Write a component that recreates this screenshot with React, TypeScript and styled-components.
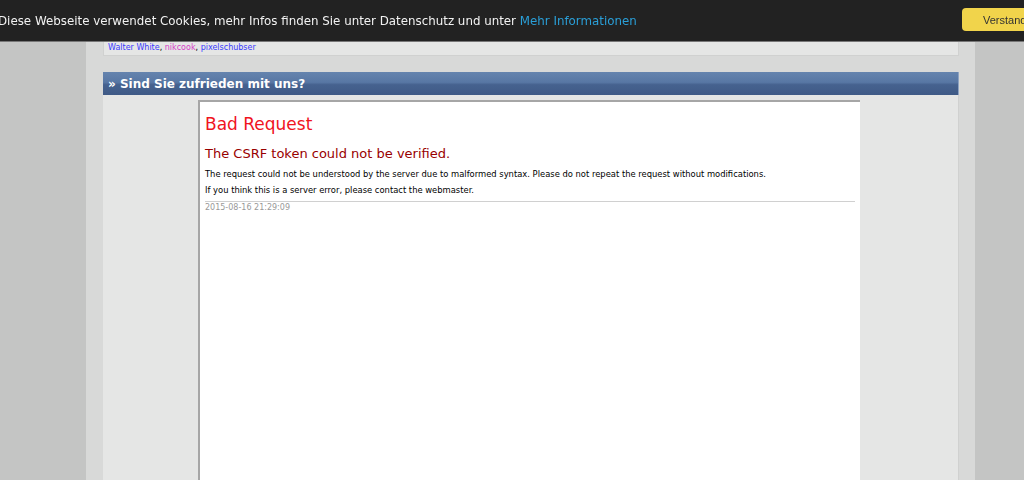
import React from "react";
import styled, { createGlobalStyle } from "styled-components";

const Global = createGlobalStyle`
  html, body {
    margin: 0;
    padding: 0;
    background: #c4c5c4;
    font-family: "DejaVu Sans", Verdana, sans-serif;
    overflow: hidden;
  }
`;

const CookieBar = styled.div`
  position: fixed;
  top: 0;
  left: 0;
  right: 0;
  height: 42px;
  background: #222222;
  border-bottom: 1px solid #777;
  box-sizing: border-box;
  display: flex;
  align-items: center;
  z-index: 10;
`;

const CookieText = styled.span`
  margin: 1px 0 0 -2px;
  color: #f2f2f2;
  font-size: 11.85px;
  white-space: nowrap;
  flex: 1;
`;

const CookieLink = styled.a`
  color: #2a9fd8;
  text-decoration: none;
`;

const CookieButton = styled.button`
  margin-right: -40px;
  height: 23px;
  width: 102px;
  background: #f1d44b;
  border: none;
  border-radius: 4px;
  color: #333;
  font-family: "Liberation Sans", Arial, sans-serif;
  font-size: 11px;
  text-align: left;
  padding: 0 0 0 21px;
  margin-top: -2px;
`;

const Wrapper = styled.div`
  margin-left: 86px;
  width: 889px;
  min-height: 520px;
  background: #d8d9d8;
  padding: 20px 16px 0 17px;
  box-sizing: border-box;
`;

const Box = styled.div`
  background: #e5e6e5;
  border: 1px solid #d0d1d0;
  height: 36px;
  box-sizing: border-box;
  padding: 21px 0 0 4px;
  font-size: 8px;
  line-height: 11px;
`;

const Name = styled.a<{ $color: string }>`
  color: ${(p) => p.$color};
  text-decoration: none;
`;

const Section = styled.div`
  margin-top: 16px;
`;

const Header = styled.div`
  height: 23px;
  background: linear-gradient(#6584ae, #5877a4 45%, #46628f 55%, #3f5a86);
  border-right: 1px solid #8ea3c2;
  color: #fff;
  font-weight: bold;
  font-size: 12px;
  display: flex;
  align-items: center;
  padding-left: 5px;
  box-sizing: border-box;
`;

const Panel = styled.div`
  background: #e5e6e5;
  border-right: 1px solid #d0d1d0;
  padding: 5px 0 0 95px;
  height: 420px;
`;

const Frame = styled.div`
  width: 662px;
  height: 420px;
  background: #fff;
  border-top: 2px solid #a6a6a6;
  border-left: 2px solid #a6a6a6;
  box-sizing: border-box;
  padding: 11px 5px 0 5px;
`;

const Title = styled.h1`
  margin: 0;
  font-weight: normal;
  color: #f0141e;
  font-size: 17px;
  line-height: 22px;
`;

const Subtitle = styled.h2`
  margin: 10px 0 0;
  font-weight: normal;
  color: #990000;
  font-size: 13px;
  line-height: 18px;
`;

const Text = styled.p`
  margin: 6px 0 0;
  color: #000;
  font-size: 8.4px;
  line-height: 10px;
  & + & {
    margin-top: 6px;
  }
`;

const Rule = styled.hr`
  border: none;
  border-top: 1px solid #d0d0d0;
  margin: 6px 0 0;
`;

const Stamp = styled.div`
  margin-top: 1px;
  color: #999;
  font-size: 8px;
  line-height: 10px;
`;

export default function App() {
  return (
    <>
      <Global />
      <CookieBar>
        <CookieText>
          Diese Webseite verwendet Cookies, mehr Infos finden Sie unter Datenschutz und unter{" "}
          <CookieLink href="#">Mehr Informationen</CookieLink>
        </CookieText>
        <CookieButton>Verstanden</CookieButton>
      </CookieBar>
      <Wrapper>
        <Box>
          <Name $color="#3a3aff">Walter White</Name>,{" "}
          <Name $color="#d63cc8">nikcook</Name>,{" "}
          <Name $color="#3a3aff">pixelschubser</Name>
        </Box>
        <Section>
          <Header>» Sind Sie zufrieden mit uns?</Header>
          <Panel>
            <Frame>
              <Title>Bad Request</Title>
              <Subtitle>The CSRF token could not be verified.</Subtitle>
              <Text>
                The request could not be understood by the server due to malformed syntax. Please do not repeat the request without modifications.
              </Text>
              <Text>If you think this is a server error, please contact the webmaster.</Text>
              <Rule />
              <Stamp>2015-08-16 21:29:09</Stamp>
            </Frame>
          </Panel>
        </Section>
      </Wrapper>
    </>
  );
}
